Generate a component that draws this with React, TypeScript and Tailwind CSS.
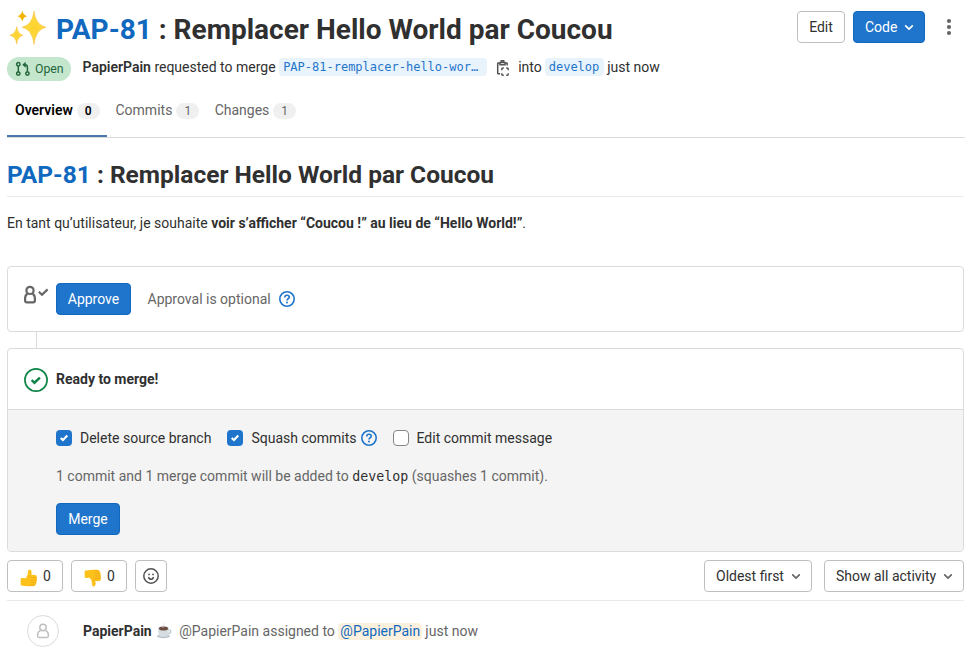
import type { ReactNode } from "react";

function Sparkles() {
  return (
    <svg width="38" height="36" viewBox="0 0 38 36" className="shrink-0">
      <defs>
        <radialGradient id="star" cx="0.5" cy="0.5" r="0.5">
          <stop offset="0" stopColor="#fdd22f" />
          <stop offset="0.6" stopColor="#fdd83c" />
          <stop offset="1" stopColor="#f5c63d" />
        </radialGradient>
      </defs>
      <path d="M25 1Q26.6 15 37 17.2Q26.6 19.6 25 34.5Q23.4 19.6 13 17.2Q23.4 15 25 1Z" fill="url(#star)" stroke="#f4bc32" strokeWidth=".5" />
      <path d="M7.7 16.5Q8.6 24 14 25.3Q8.6 26.5 7.7 34Q6.8 26.5 .8 25.3Q6.8 24 7.7 16.5Z" fill="url(#star)" stroke="#f4bc32" strokeWidth=".5" />
      <path d="M13.3 .6Q14.1 5.5 18.4 6.2Q14.1 6.9 13.3 11.8Q12.5 6.9 8.2 6.2Q12.5 5.5 13.3 .6Z" fill="#f4b400" />
    </svg>
  );
}

function Thumb({ down = false }: { down?: boolean }) {
  return (
    <svg width="18" height="18" viewBox="0 0 18 18" className={down ? "shrink-0 -scale-y-100" : "shrink-0"}>
      <path d="M.7 9.8Q.9 9 1.9 9.1L5.8 9.3Q8.1 6.6 7.9 3.2Q7.8 .5 9.5 .4Q11.7.6 11.7 3.4Q11.7 5 11 5.7L15.4 5.9Q17.2 6.3 16.7 8Q17.5 9.4 16.7 10.8Q17.3 12.2 16.3 13.4Q16.7 15.2 15.3 16Q15 17.3 12.8 17.3H8Q4 16.9 1.7 16.4Q.7 16.3.6 15.5Z" fill="#fcc21b" />
      <path d="M10.9 8.6h5.5M10.7 11.1h5.7M10.7 13.6h5.3M10.5 15.9h4.4M11 5.8Q9.8 6.4 9.6 8" fill="none" stroke="#f0a318" strokeWidth=".7" />
    </svg>
  );
}

function Coffee() {
  return (
    <svg width="16" height="16" viewBox="0 0 16 16" className="shrink-0">
      <ellipse cx="7.5" cy="13.2" rx="6.5" ry="2" fill="#b8c4ca" />
      <path d="M12 7.2q3-.7 2.8 1.4q-.3 2-3.4 2.1" fill="none" stroke="#b8c4ca" strokeWidth="1.2" />
      <path d="M2 6.3Q2 13.4 5.4 13.8H9.6Q12.8 13.4 13 6.3Z" fill="#d5dde1" />
      <ellipse cx="7.5" cy="5.6" rx="5.6" ry="2.7" fill="#e0e6e9" />
      <ellipse cx="7.5" cy="5.6" rx="4.6" ry="2" fill="#6d4c41" />
      <path d="M7.2 4.6q-2-1.2 0-2.2q1.3-.9.2-2" fill="none" stroke="#dde3e6" strokeWidth="1" />
    </svg>
  );
}

function MergeRequest() {
  return (
    <svg width="16" height="16" viewBox="0 0 16 16" fill="none" stroke="#24663b" strokeWidth="1.5" className="shrink-0">
      <circle cx="3.3" cy="3.2" r="1.7" />
      <circle cx="3.3" cy="12.6" r="1.7" />
      <circle cx="12.4" cy="12.6" r="1.7" />
      <path d="M3.3 5v6M12.4 11V6.2q0-2.4-2.4-2.4H8.8" />
      <path d="M10.7 .8 7.3 3.8l3.4 3Z" fill="#24663b" stroke="none" />
    </svg>
  );
}

function CopyIcon() {
  return (
    <svg width="16" height="18" viewBox="0 0 16 18" fill="none" stroke="#535353" strokeWidth="1.5" className="shrink-0">
      <path d="M5 2.9H3.2q-.5 0-.5.5v9.9q0 .5.5.5h1.9M10.4 2.9h1.3q.5 0 .5.5V5.4" />
      <path d="M5 2.4h5v2.3H5zM6.3 2V.8h2.4V2" />
      <path d="M6.8 10.2V9.1q0-1 1-1h1M11.2 8.1h1q1 0 1 1v1.1M13.2 13.2v1.1q0 1-1 1h-1M8.8 15.3h-1q-1 0-1-1v-1.1" />
    </svg>
  );
}

function Chevron({ className }: { className: string }) {
  return (
    <svg width="16" height="16" viewBox="0 0 16 16" fill="none" stroke="currentColor" strokeWidth="1.7" strokeLinecap="round" strokeLinejoin="round" className={className}>
      <path d="M4.7 6.9 8 10.1l3.3-3.2" />
    </svg>
  );
}

function Help() {
  return (
    <svg width="16" height="16" viewBox="0 0 16 16" fill="none" stroke="#1f75cb" strokeWidth="1.6" className="shrink-0">
      <circle cx="8" cy="8" r="7.2" />
      <path d="M5.8 6.4C5.8 5 6.7 4.3 8 4.3s2.2.8 2.2 1.9C10.2 7.8 8 7.7 8 9.5" />
      <circle cx="8" cy="11.5" r="1" fill="#1f75cb" stroke="none" />
    </svg>
  );
}

function Person() {
  return (
    <svg width="16" height="16" viewBox="0 0 16 16" fill="none" stroke="#bfbfbf" strokeWidth="1.5" className="shrink-0">
      <circle cx="8" cy="4.5" r="3.2" />
      <path d="M5.6 7.4Q2.6 8.7 2.6 12v1q0 1.4 1.4 1.4h8q1.4 0 1.4-1.4v-1q0-3.3-3-4.6" />
    </svg>
  );
}

function Approval() {
  return (
    <svg width="25" height="20" viewBox="0 0 25 20" fill="none" stroke="#666" strokeWidth="2.2" className="shrink-0">
      <circle cx="6" cy="5.4" r="3.6" />
      <path d="M3.4 8.7Q1.1 10 1.1 13.6v2q0 1.8 1.8 1.8h6.2q1.8 0 1.8-1.8v-2q0-3.6-2.3-4.9" />
      <path d="M14.8 6.8 18 9.8 23.6 4.4" />
    </svg>
  );
}

function CheckBox({ checked = false }: { checked?: boolean }) {
  if (!checked) return <span className="size-4 shrink-0 rounded border border-[#868686] bg-white" />;
  return (
    <span className="flex size-4 shrink-0 items-center justify-center rounded bg-[#1f75cb]">
      <svg width="16" height="16" viewBox="0 0 16 16" fill="none" stroke="white" strokeWidth="2.1">
        <path d="M4.7 7.9 7 10.1 11.3 5.6" />
      </svg>
    </span>
  );
}

function Button({ children, primary = false, className }: { children: ReactNode; primary?: boolean; className: string }) {
  const tone = primary ? "border-[#1068bf] bg-[#1f75cb] text-white" : "border-[#bfbfbf] bg-white text-[#303030]";
  return <button className={`flex h-8 shrink-0 items-center rounded border text-sm ${tone} ${className}`}>{children}</button>;
}

function Tab({ label, count, active = false, className }: { label: string; count: number; active?: boolean; className: string }) {
  return (
    <div className={`flex shrink-0 items-start ${active ? "border-b-2 border-[#4977a8] font-semibold text-black" : "text-[#666]"} ${className}`}>
      <span className="leading-5">{label}</span>
      <span className="ml-1 mt-[3px] flex h-4 w-[22.75px] items-center justify-center rounded-full bg-[#f0f0f0] text-xs">{count}</span>
    </div>
  );
}

export default function App() {
  return (
    <div className="h-[655px] w-[974px] overflow-hidden bg-white pl-[7px] font-['Roboto',sans-serif] text-sm leading-5 text-[#303030]">
      <header className="flex h-[55px] items-start">
        <div className="ml-[2px] mt-[10px]"><Sparkles /></div>
        <h1 className="ml-[9px] mt-[14px] whitespace-nowrap text-[28px] font-bold leading-8">
          <span className="text-[#1068bf]">PAP-81</span> : Remplacer Hello World par Coucou
        </h1>
        <div className="ml-auto mr-[14px] mt-[11px] flex items-center">
          <Button className="w-12 justify-center">Edit</Button>
          <Button primary className="ml-2 w-[72px] pl-[11px]">Code<Chevron className="ml-1 shrink-0" /></Button>
          <svg width="22" height="32" viewBox="0 0 22 32" fill="#666" className="ml-[13px]">
            <circle cx="11" cy="10" r="2.1" /><circle cx="11" cy="16" r="2.1" /><circle cx="11" cy="22" r="2.1" />
          </svg>
        </div>
      </header>

      <div className="flex h-[45px] items-start whitespace-nowrap">
        <span className="mt-[2px] flex h-6 w-16 items-center rounded-full bg-[#c3e6cd] pl-2 text-[#24663b]">
          <MergeRequest /><span className="ml-1 text-[12.25px]">Open</span>
        </span>
        <span className="ml-[11.5px] mt-[2px]"><b className="font-semibold">PapierPain</b> requested to merge</span>
        <span className="ml-[3.5px] mt-[3px] h-[18px] w-[208px] rounded bg-[#e9f3fc] pl-1 font-['DejaVu_Sans_Mono',monospace] text-xs leading-[18px] text-[#1f75cb]">PAP-81-remplacer-hello-wor…</span>
        <span className="ml-2 mt-[5px]"><CopyIcon /></span>
        <span className="ml-[7px] mt-[2px]">into</span>
        <span className="ml-[3px] mt-[3px] h-[18px] w-[59px] rounded bg-[#e9f3fc] pl-1 font-['DejaVu_Sans_Mono',monospace] text-xs leading-[18px] text-[#1f75cb]">develop</span>
        <span className="ml-[3.5px] mt-[2px]">just now</span>
      </div>

      <nav className="mr-[9px] flex h-[38px] border-b border-[#dbdbdb]">
        <Tab label="Overview" count={0} active className="-mt-1 h-[41px] w-[100px] pl-2 pt-[4px]" />
        <Tab label="Commits" count={1} className="ml-[8.5px]" />
        <Tab label="Changes" count={1} className="ml-[15.5px]" />
      </nav>

      <main className="mr-[10px]">
        <h2 className="h-[59px] border-b border-[#eaeaea] pt-[22px] text-[24.5px] font-bold leading-[30px]">
          <span className="text-[#1068bf]">PAP-81</span> : Remplacer Hello World par Coucou
        </h2>
        <p className="mt-4 whitespace-nowrap">
          En tant qu’utilisateur, je souhaite <b className="font-bold">voir s’afficher “Coucou !” au lieu de “Hello World!”</b>.
        </p>

        <section className="mt-[33px] flex h-[66px] rounded border border-[#dbdbdb] pl-4 pt-4">
          <div className="mt-[2px]"><Approval /></div>
          <Button primary className="ml-[7px] w-[75px] justify-center">Approve</Button>
          <span className="ml-[16.5px] mt-[6px] text-[#666]">Approval is optional</span>
          <span className="ml-[8.5px] mt-2"><Help /></span>
        </section>
        <div className="ml-[29px] h-4 border-l border-[#dbdbdb]" />
        <section className="h-[204px] overflow-hidden rounded border border-[#dbdbdb]">
          <div className="flex h-[61px] border-b border-[#dbdbdb] pl-4">
            <svg width="24" height="24" viewBox="0 0 24 24" fill="none" stroke="#108548" className="mt-[19px]">
              <circle cx="12" cy="12" r="11.1" strokeWidth="1.7" />
              <path d="m7.6 12.1 2.9 2.6 5.4-5.1" strokeWidth="2.5" />
            </svg>
            <b className="ml-2 mt-5 font-bold">Ready to merge!</b>
          </div>
          <div className="h-[141px] bg-[#f4f4f4] pl-12 pt-[18px]">
            <div className="flex h-5 items-center">
              <CheckBox checked /><span className="ml-2">Delete source branch</span>
              <span className="ml-4 flex"><CheckBox checked /></span><span className="ml-2">Squash commits</span>
              <span className="ml-1"><Help /></span>
              <span className="ml-4 flex"><CheckBox /></span><span className="ml-2">Edit commit message</span>
            </div>
            <p className="mt-[18px] h-5 text-[#666]">
              1 commit and 1 merge commit will be added to <span className="font-['DejaVu_Sans_Mono',monospace] text-[13.3px] text-[#303030]">develop</span> (squashes 1 commit).
            </p>
            <Button primary className="mt-[17px] w-16 justify-center">Merge</Button>
          </div>
        </section>

        <div className="flex h-[49px] items-start border-b border-[#eaeaea] pt-2">
          <Button className="w-14 pl-[12px]"><span className="mt-1"><Thumb /></span><span className="ml-[5px]">0</span></Button>
          <Button className="ml-2 w-14 pl-[12px]"><span className="mt-1"><Thumb down /></span><span className="ml-[5px]">0</span></Button>
          <Button className="ml-2 w-8 justify-center">
            <svg width="16" height="16" viewBox="0 0 16 16" fill="none" stroke="#535353" strokeWidth="1.5" className="shrink-0">
              <circle cx="8" cy="8" r="7.2" />
              <path d="M5.5 9q.4 2.2 2.5 2.2T10.5 9" />
              <circle cx="6" cy="6.4" r=".9" fill="#535353" stroke="none" /><circle cx="10" cy="6.4" r=".9" fill="#535353" stroke="none" />
            </svg>
          </Button>
          <Button className="ml-auto w-[108px] pl-[11px]">Oldest first<Chevron className="ml-1 shrink-0 text-[#666]" /></Button>
          <Button className="ml-3 w-[140px] pl-[11px]">Show all activity<Chevron className="ml-1 shrink-0 text-[#666]" /></Button>
        </div>

        <div className="flex h-[54px] items-start whitespace-nowrap pt-[14px] text-[#666]">
          <span className="ml-5 flex size-8 items-center justify-center rounded-full border border-[#dbdbdb]"><Person /></span>
          <b className="ml-6 mt-[6px] font-bold text-[#303030]">PapierPain</b>
          <span className="ml-1 mt-2"><Coffee /></span>
          <span className="ml-[7.5px] mt-[6px]">@PapierPain assigned to</span>
          <span className="ml-[3.5px] mt-2 h-[17px] w-[84px] rounded bg-[#fdf1dd] pl-[2px] leading-4 text-[#1068bf]">@PapierPain</span>
          <span className="ml-[3px] mt-[6px]">just now</span>
        </div>
      </main>
    </div>
  );
}
